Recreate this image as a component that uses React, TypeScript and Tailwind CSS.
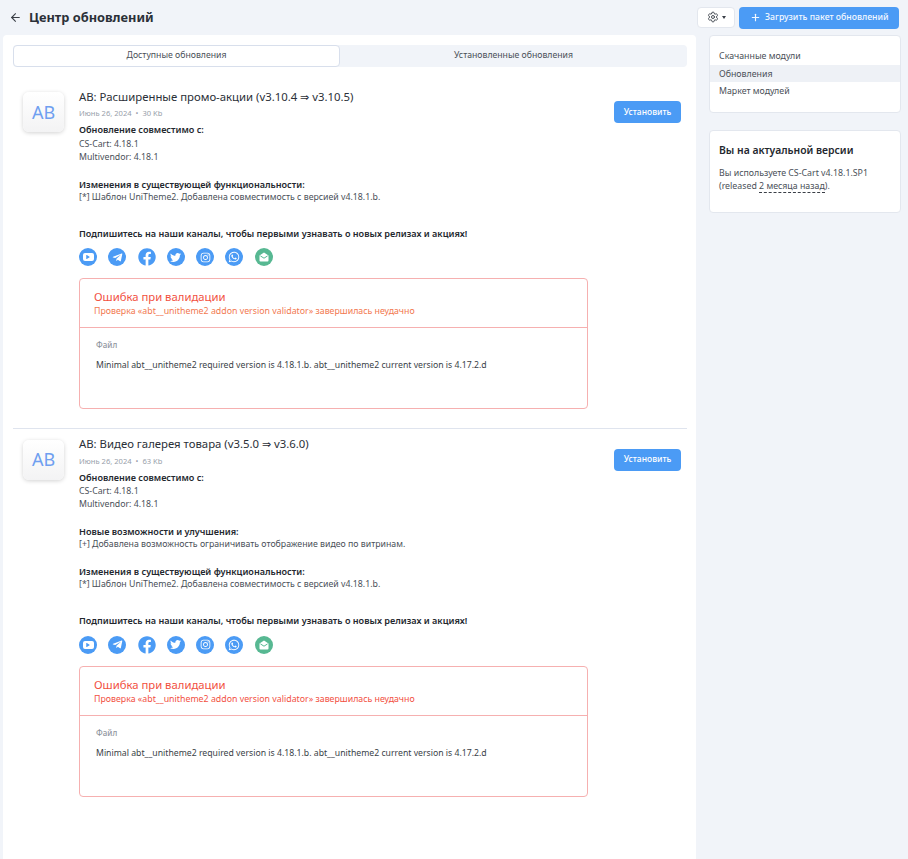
import React from "react";
import { ArrowLeft, Plus, Settings } from "lucide-react";
import { FaFacebook, FaTelegramPlane, FaTwitter, FaInstagram, FaWhatsapp, FaPlay } from "react-icons/fa";

const font = { fontFamily: '"Noto Sans", "Open Sans", sans-serif' };

function Circle({ children, green }: { children: React.ReactNode; green?: boolean }) {
  return (
    <span className={`flex h-[18px] w-[18px] items-center justify-center rounded-full text-white ${green ? "bg-[#57b892]" : "bg-[#4b9bf5]"}`}>
      {children}
    </span>
  );
}

function Socials() {
  return (
    <div className="mt-[8.5px] flex h-[18px] gap-[11.3px]">
      <Circle>
        <span className="flex h-[8px] w-[11px] items-center justify-center rounded-[2px] bg-white text-[#4b9bf5]">
          <FaPlay size={4} />
        </span>
      </Circle>
      <Circle><FaTelegramPlane size={11} /></Circle>
      <span className="flex h-[18px] w-[18px] items-center justify-center text-[#4b9bf5]"><FaFacebook size={18} /></span>
      <Circle><FaTwitter size={11} /></Circle>
      <Circle><FaInstagram size={11} /></Circle>
      <Circle><FaWhatsapp size={12} /></Circle>
      <Circle green>
        <svg width="12" height="12" viewBox="0 0 12 12" fill="white">
          <path d="M1.5 4.6 6 1.4l4.5 3.2v5a1 1 0 0 1-1 1h-7a1 1 0 0 1-1-1z" />
          <path d="M2.4 4.9 6 7.2l3.6-2.3" fill="none" stroke="#57b892" strokeWidth="1" />
        </svg>
      </Circle>
    </div>
  );
}

function ErrorBox({ faded }: { faded?: boolean }) {
  return (
    <div className="mt-[12px] h-[131px] w-[509px] rounded-[4px] border border-[#f6b0b0]">
      <div className="h-[49px] border-b border-[#f6b0b0] pl-[14px] pt-[9px]">
        <div className="text-[11.3px] leading-[17px] text-[#f2503f]">Ошибка при валидации</div>
        <div className={`text-[8.8px] leading-[13px] ${faded ? "text-[#f2784f]" : "text-[#f2503f]"}`}>
          Проверка «abt__unitheme2 addon version validator» завершилась неудачно
        </div>
      </div>
      <div className="pl-[16px] pt-[10px]">
        <div className="text-[8px] font-medium leading-[13px] text-[#8f959e]">Файл</div>
        <div className="mt-[8px] text-[8.7px] leading-[13px] text-[#3a3f47]">
          Minimal abt__unitheme2 required version is 4.18.1.b. abt__unitheme2 current version is 4.17.2.d
        </div>
      </div>
    </div>
  );
}

function Head({ children }: { children: React.ReactNode }) {
  return <div className="text-[9.1px] font-semibold text-[#23272e]">{children}</div>;
}

function Item({ title, size, news, faded, top }: { title: string; size: string; news?: boolean; faded?: boolean; top: string }) {
  return (
    <div className={`flex pl-[10px] ${top}`}>
      <div className="mt-[4.5px] flex h-[40px] w-[41px] shrink-0 items-center justify-center rounded-[6px] bg-gradient-to-b from-white to-[#f3f3f4] text-[18px] text-[#6f9ff0] shadow-[0_1px_4px_rgba(0,0,0,0.18)]">
        AB
      </div>
      <div className="ml-[15px] flex-1">
        <div className="flex h-[35.5px] justify-between pr-[6px]">
          <div>
            <div className="text-[11.35px] leading-[17px] text-[#2b3038]">{title}</div>
            <div className="mt-[3.5px] text-[7.6px] leading-[11px] text-[#98a0aa]">Июнь 26, 2024 &nbsp;•&nbsp; {size}</div>
          </div>
          <button className="mt-[13.5px] h-[22px] w-[67px] rounded-[4px] bg-[#4b9bf5] text-[8.5px] font-medium text-white">Установить</button>
        </div>
        <div className="text-[8.75px] leading-[13px] text-[#4a5058]">
          <Head>Обновление совместимо с:</Head>
          <div className="mt-[1.5px]">CS-Cart: 4.18.1</div>
          <div>Multivendor: 4.18.1</div>
          {news && (
            <div className="mt-[14px]">
              <Head>Новые возможности и улучшения:</Head>
              <div>[+] Добавлена возможность ограничивать отображение видео по витринам.</div>
            </div>
          )}
          <div className="mt-[14px]">
            <Head>Изменения в существующей функциональности:</Head>
            <div>[*] Шаблон UniTheme2. Добавлена совместимость с версией v4.18.1.b.</div>
          </div>
          <div className="mt-[23px]">
            <Head>Подпишитесь на наши каналы, чтобы первыми узнавать о новых релизах и акциях!</Head>
          </div>
        </div>
        <Socials />
        <ErrorBox faded={faded} />
      </div>
    </div>
  );
}

export default function App() {
  return (
    <div style={font} className="flex h-[859px] w-[908px] flex-col overflow-hidden bg-[#f1f4f9]">
      <header className="flex h-[35px] shrink-0 items-center pl-[9px] pr-[9px]">
        <ArrowLeft size={13} className="text-[#3a3f47]" />
        <h1 className="ml-[7px] text-[12.8px] font-bold text-[#2b3038]">Центр обновлений</h1>
        <div className="ml-auto flex gap-[4px]">
          <button className="flex h-[21px] w-[38px] items-center justify-center gap-[3px] rounded-[4px] border border-[#e3e7ee] bg-white text-[#4a5058]">
            <Settings size={12} />
            <span className="h-0 w-0 border-x-[2.5px] border-t-[3px] border-x-transparent border-t-[#3a3f47]" />
          </button>
          <button className="flex h-[22px] w-[160px] items-center whitespace-nowrap rounded-[4px] bg-[#4b9bf5] pl-[11px] text-[8.7px] font-medium text-[#f3f8ff]">
            <Plus size={11} strokeWidth={2.5} />
            <span className="ml-[4px]">Загрузить пакет обновлений</span>
          </button>
        </div>
      </header>
      <div className="flex min-h-0 flex-1">
        <main className="ml-[3px] w-[693px] rounded-t-[4px] bg-white pl-[10px] pr-[9px] pt-[10px]">
          <div className="flex h-[22px] rounded-[4px] bg-[#f1f4f9] text-[8.7px] text-[#4a5058]">
            <div className="flex w-[327px] items-center justify-center rounded-[4px] border border-[#d8dfec] bg-white">Доступные обновления</div>
            <div className="flex flex-1 items-center justify-center">Установленные обновления</div>
          </div>
          <Item top="mt-[20.5px]" title="AB: Расширенные промо-акции (v3.10.4 ⇒ v3.10.5)" size="30 Kb" faded />
          <div className="mt-[19px] h-px bg-[#dfe4ee]" />
          <Item top="mt-[6px]" title="AB: Видео галерея товара (v3.5.0 ⇒ v3.6.0)" size="63 Kb" news />
        </main>
        <aside className="ml-[13px] flex w-[192px] flex-col gap-[17px]">
          <div className="h-[78px] rounded-[4px] border border-[#e3e7ee] bg-white pt-[12px] text-[8.8px] leading-[17px] text-[#4a5058]">
            <div className="pl-[9px]">Скачанные модули</div>
            <div className="bg-[#eef1f6] pl-[9px] pt-px leading-[16px]">Обновления</div>
            <div className="pl-[9px] pt-px leading-[16px]">Маркет модулей</div>
          </div>
          <div className="h-[83px] rounded-[4px] border border-[#e3e7ee] bg-white px-[9px] pt-[12px]">
            <div className="text-[10.4px] font-semibold leading-[15px] text-[#23272e]">Вы на актуальной версии</div>
            <div className="mt-[8.5px] text-[8.8px] leading-[13px] text-[#4a5058]">
              <div>Вы используете CS-Cart v4.18.1.SP1</div>
              <div>(released <span className="border-b border-dashed border-[#3a3f47]">2 месяца назад</span>).</div>
            </div>
          </div>
        </aside>
      </div>
    </div>
  );
}
